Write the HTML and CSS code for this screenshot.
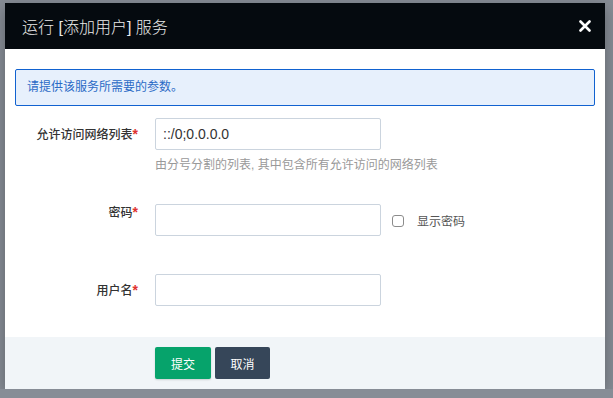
FILE: index.html
```html
<!DOCTYPE html>
<html lang="zh-CN">
<head>
    <meta charset="UTF-8">
    <meta name="viewport" content="width=device-width, initial-scale=1.0">
    <title>运行服务</title>
    <link rel="stylesheet" href="styles.css">
</head>
<body>
    <div class="modal">
        <div class="modal-header">
            <h2>运行 [添加用户] 服务</h2>
            <span class="close">
                <svg width="12" height="12" viewBox="0 0 12 12"><path d="M1.5 1.5L10.5 10.5M10.5 1.5L1.5 10.5" stroke="#fff" stroke-width="2.6" stroke-linecap="round"/></svg>
            </span>
        </div>
        <div class="modal-body">
            <div class="alert">请提供该服务所需要的参数。</div>
            <form class="form">
                <div class="form-group group-net">
                    <label for="nets">允许访问网络列表<span class="req">*</span></label>
                    <div class="field">
                        <input type="text" id="nets" value="::/0;0.0.0.0">
                        <div class="help">由分号分割的列表, 其中包含所有允许访问的网络列表</div>
                    </div>
                </div>
                <div class="form-group group-pass">
                    <label for="pass" class="label-top">密码<span class="req">*</span></label>
                    <div class="field field-row">
                        <input type="password" id="pass">
                        <label class="check"><span class="box"></span>显示密码</label>
                    </div>
                </div>
                <div class="form-group">
                    <label for="user">用户名<span class="req">*</span></label>
                    <div class="field">
                        <input type="text" id="user">
                    </div>
                </div>
            </form>
        </div>
        <div class="modal-footer">
            <button class="btn btn-primary">提交</button>
            <button class="btn btn-dark">取消</button>
        </div>
    </div>
</body>
</html>
```

FILE: styles.css
```css
body {
    font-family: "Liberation Sans", "Noto Sans CJK SC", sans-serif;
    background-color: #878d96;
    margin: 0;
    padding: 0;
}
.modal {
    width: 600px;
    margin: 3px 0 0 5px;
    background: #fff;
    box-shadow: 0 5px 15px rgba(0, 0, 0, 0.3);
}
.modal-header {
    height: 46px;
    background: #050a0f;
    display: flex;
    align-items: center;
    justify-content: space-between;
    padding: 0 14px 0 17px;
}
.modal-header h2 {
    margin: 0;
    font-size: 16px;
    font-weight: 300;
    color: #ececec;
}
.close {
    display: flex;
}
.modal-body {
    padding: 20px 10px 30px 10px;
}
.alert {
    height: 35px;
    line-height: 35px;
    border: 1px solid #1162d0;
    border-radius: 2px;
    background: #e7f0fc;
    color: #2b6bc6;
    font-size: 12px;
    padding-left: 11px;
    margin-bottom: 12px;
}
.form-group {
    display: flex;
    align-items: flex-start;
}
.group-net {
    margin-bottom: 30px;
}
.group-pass {
    margin-bottom: 38px;
}
.form-group > label {
    width: 123px;
    padding-right: 5px;
    margin-right: 12px;
    text-align: right;
    font-size: 12px;
    font-weight: 500;
    color: #333;
    line-height: 32px;
}
.form-group > label.label-top {
    line-height: 16px;
}
.req {
    color: #e0322f;
    font-size: 14px;
    font-weight: bold;
}
input {
    width: 226px;
    height: 32px;
    box-sizing: border-box;
    border: 1px solid #cbd4de;
    border-radius: 2px;
    padding: 0 7px;
    font-family: "Liberation Sans", "Noto Sans CJK SC", sans-serif;
    font-size: 14px;
    color: #333;
    margin: 0;
}
.help {
    margin-top: 6px;
    font-size: 12px;
    line-height: 18px;
    color: #999;
}
.field-row {
    display: flex;
    align-items: center;
}
.check {
    display: flex;
    align-items: center;
    font-size: 12px;
    color: #555;
    margin-left: 11px;
    padding-top: 1px;
}
.box {
    width: 10px;
    height: 10px;
    border: 1px solid #8c8c8c;
    border-radius: 3px;
    margin-right: 13px;
}
.modal-footer {
    background: #f1f5f8;
    padding: 10px 0 10px 150px;
    display: flex;
    gap: 4px;
}
.btn {
    height: 32px;
    width: 56px;
    border: none;
    border-radius: 2px;
    color: #fff;
    font-family: "Liberation Sans", "Noto Sans CJK SC", sans-serif;
    font-size: 12px;
    padding: 0;
}
.btn-primary {
    background-color: #06a36b;
    box-shadow: 0 1px 2px rgba(0, 0, 0, 0.15);
}
.btn-dark {
    width: 55px;
    background-color: #364659;
}
```
